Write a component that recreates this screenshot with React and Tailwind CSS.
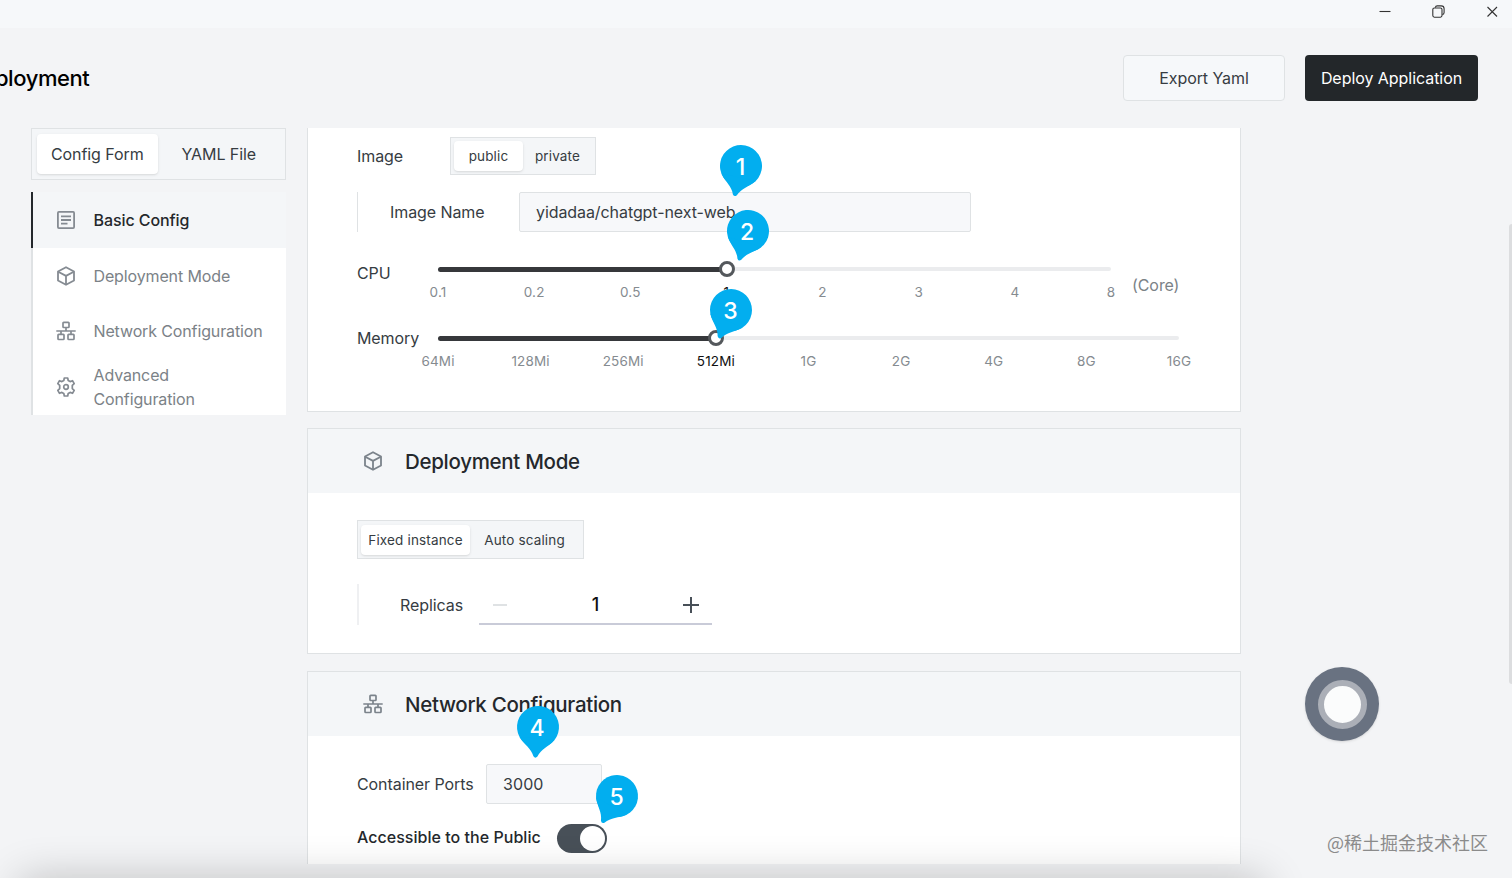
import React, { useState } from "react";

const cpuMarks = ["0.1", "0.2", "0.5", "1", "2", "3", "4", "8"];
const memoryMarks = ["64Mi", "128Mi", "256Mi", "512Mi", "1G", "2G", "4G", "8G", "16G"];

const FormIcon = () => (
  <svg width="20" height="20" viewBox="0 0 20 20" fill="none" stroke="currentColor" strokeWidth="1.8">
    <rect x="1.9" y="1.9" width="16.2" height="16.2" rx="1" />
    <path d="M5 6.3h10M5 10h10M5 13.7h6.5" />
  </svg>
);

const CubeIcon = () => (
  <svg width="20" height="20" viewBox="0 0 20 20" fill="none" stroke="currentColor" strokeWidth="1.8" strokeLinejoin="round">
    <path d="M10 1.2l8 4.3v9L10 18.8l-8-4.3v-9z" />
    <path d="M2.2 5.7L10 9.9l7.8-4.2M10 9.9v8.7" />
  </svg>
);

const NetworkIcon = () => (
  <svg width="20" height="20" viewBox="0 0 20 20" fill="none" stroke="currentColor" strokeWidth="1.7">
    <rect x="7" y="1.3" width="6" height="5.2" rx="0.8" />
    <rect x="2" y="13.3" width="6" height="5.2" rx="0.8" />
    <rect x="12" y="13.3" width="6" height="5.2" rx="0.8" />
    <path d="M0.3 10h19.4M10 6.5V10M5 10v3.3M15 10v3.3" />
  </svg>
);

const GearIcon = () => (
  <svg width="20" height="20" viewBox="0 0 20 20" fill="none" stroke="currentColor" strokeWidth="1.7" strokeLinejoin="round">
    <path d="M8.3 1h3.4l.5 2.5 1.9 1.1 2.4-.9 1.7 3-1.9 1.7v3.2l1.9 1.7-1.7 3-2.4-.9-1.9 1.1-.5 2.5H8.3l-.5-2.5-1.9-1.1-2.4.9-1.7-3 1.9-1.7V8.4L1.8 6.7l1.7-3 2.4.9 1.9-1.1z" />
    <circle cx="10" cy="10" r="2.3" />
  </svg>
);

const navItems = [
  { label: "Basic Config", icon: FormIcon },
  { label: "Deployment Mode", icon: CubeIcon },
  { label: "Network Configuration", icon: NetworkIcon },
  { label: "Advanced Configuration", icon: GearIcon },
];

const WindowControls = () => (
  <div className="flex h-7 items-center justify-end gap-[41px] bg-[#f6f8fa] pr-[13px] pb-[5px] text-[#333]">
    <svg width="13" height="13" viewBox="0 0 13 13" stroke="currentColor" strokeWidth="1.1">
      <path d="M1.5 6.5h11" />
    </svg>
    <svg width="13" height="13" viewBox="0 0 13 13" fill="none" stroke="currentColor" strokeWidth="1.1">
      <rect x="0.8" y="3" width="9.2" height="9.2" rx="1.6" />
      <path d="M3.3 2.6C3.5 1.4 4.3.9 5.3.9h3.9c1.8 0 2.9 1.2 2.9 2.9v3.8c0 1-.5 1.8-1.7 2" />
    </svg>
    <svg width="13" height="13" viewBox="0 0 13 13" stroke="currentColor" strokeWidth="1.1">
      <path d="M1.5 2l9.5 9.5M11 2L1.5 11.5" />
    </svg>
  </div>
);

const Slider = ({ marks, value, className }) => {
  const step = 100 / (marks.length - 1);
  return (
    <div className={className}>
      <div className="relative h-1 rounded-full bg-[#ebecee]">
        <div className="h-[5px] rounded-full bg-[#36383b]" style={{ width: `${step * value}%` }} />
        <div
          className="absolute top-1/2 size-4 -translate-x-1/2 -translate-y-1/2 rounded-full border-3 border-[#54585c] bg-white"
          style={{ left: `calc(${step * value}% + 0.5px)` }}
        />
        {marks.map((mark, i) => (
          <span
            key={mark}
            className={`absolute top-[15px] -translate-x-1/2 text-[13.5px] leading-5 tracking-[0.15px] whitespace-nowrap ${
              i === value ? "text-[#111]" : "text-[#858b90]"
            }`}
            style={{ left: `${step * i}%` }}
          >
            {mark}
          </span>
        ))}
      </div>
    </div>
  );
};

const Marker = ({ number, angle, className }) => (
  <div className={`absolute size-[42px] text-white ${className}`}>
    <svg className="absolute inset-0 overflow-visible" width="42" height="42" viewBox="0 0 42 42" fill="#02aeef">
      <g transform={`rotate(${angle} 21 21)`}>
        <circle cx="21" cy="21" r="21" />
        <path d="M3.5 32.5C9 40 16 42.5 19 50.5Q21 53 23 50.5C26 42.5 33 40 38.5 32.5z" />
      </g>
    </svg>
    <span className="relative flex size-full items-center justify-center pt-0.5 pr-px text-[23px] font-medium">{number}</span>
  </div>
);

const CardHeader = ({ icon: Icon, title }) => (
  <div className="flex h-16 items-center gap-[22px] bg-[#f4f6f8] pl-[55px] text-[#7b838b]">
    <Icon />
    <h2 className="pt-0.5 text-[20.5px] font-medium tracking-[-0.3px] text-[#24282c]">{title}</h2>
  </div>
);

const App = () => {
  const [replicas, setReplicas] = useState(1);
  const [isPublic, setIsPublic] = useState(true);

  return (
    <div className="relative flex h-[878px] w-[1512px] flex-col overflow-hidden bg-[#f3f4f6] font-['Inter',sans-serif] text-[16px] tracking-[-0.08px] text-[#363c42]">
      <WindowControls />

      <header className="flex h-[100px] items-center justify-between pr-[34px]">
        <h1 className="-ml-[33px] text-[22px] font-medium tracking-[-0.43px] text-black">Deployment</h1>
        <div className="flex gap-5">
          <button className="h-[46px] w-[162px] rounded border border-[#dfe2e4] bg-[#f6f8fa]">Export Yaml</button>
          <button className="h-[46px] w-[173px] rounded bg-[#23272a] tracking-[-0.05px] text-white">Deploy Application</button>
        </div>
      </header>

      <div className="flex h-[736px] gap-[21px] overflow-hidden pl-[31px]">
        <aside className="w-[255px] shrink-0">
          <div className="flex h-[52px] items-center border border-[#dfe2e4] bg-[#f4f6f8] p-[5px]">
            <button className="h-10 w-[122px] rounded-sm bg-white shadow-sm">Config Form</button>
            <button className="h-10 w-[124px]">YAML File</button>
          </div>
          <nav className="mt-3">
            {navItems.map(({ label, icon: Icon }, i) => (
              <div
                key={label}
                className={`flex h-[55.7px] items-center gap-[18px] border-l-2 pr-5 pl-[22.5px] leading-6 ${
                  i === 0
                    ? "border-[#24282c] bg-[#f4f6f8] font-medium text-[#24282c]"
                    : "border-[#dfe2e4] bg-white tracking-[-0.13px] text-[#7b8287]"
                }`}
              >
                <span className="shrink-0 text-[#858b92]"><Icon /></span>
                <span>{label}</span>
              </div>
            ))}
          </nav>
        </aside>

        <main className="w-[934px] shrink-0">
          {/* basic config, scrolled under the header */}
          <section className="h-[284px] border border-t-0 border-[#dfe2e4] bg-white pt-[9px] pl-[49px]">
            <div className="flex h-[38px] items-center">
              <span className="w-[93px]">Image</span>
              <div className="flex h-[38px] w-[146px] items-center border border-[#dfe2e4] bg-[#f4f6f8] p-[3px] text-[13.5px] tracking-[0.15px]">
                <button className="h-[30px] w-[69px] rounded-sm bg-white pt-px shadow-sm">public</button>
                <button className="h-[30px] w-[69px] pt-px">private</button>
              </div>
            </div>

            <div className="mt-[17px] flex h-10 items-center border-l border-[#dfe2e4] pl-8">
              <span className="w-[129px]">Image Name</span>
              <div className="flex h-10 w-[452px] items-center rounded-xs border border-[#dfe2e4] bg-[#f7f8fa] pl-4">
                yidadaa/chatgpt-next-web
              </div>
            </div>

            <div className="mt-[29px] flex h-[65px]">
              <span className="w-[81px] leading-6">CPU</span>
              <Slider marks={cpuMarks} value={3} className="w-[673px] pt-[6px]" />
              <span className="pt-3 pl-[21px] leading-6 text-[#7b8287]">(Core)</span>
            </div>
            <div className="flex">
              <span className="w-[81px] leading-6">Memory</span>
              <Slider marks={memoryMarks} value={3} className="w-[741px] pt-[10px]" />
            </div>
          </section>

          <section className="mt-4 h-[226px] border border-[#dfe2e4] bg-white">
            <CardHeader icon={CubeIcon} title="Deployment Mode" />
            <div className="pt-[27px] pl-[49px]">
              <div className="flex h-[39px] w-[227px] items-center border border-[#dfe2e4] bg-[#f4f6f8] p-[3px] text-[13.5px] tracking-[0.15px]">
                <button className="h-[30px] w-[109px] rounded-sm bg-white pt-0.5 shadow-sm">Fixed instance</button>
                <button className="h-[30px] w-[109px] pt-0.5">Auto scaling</button>
              </div>
              <div className="mt-[25px] flex h-[41px] items-center border-l-2 border-[#eff0f2] pl-[41px]">
                <span className="w-[79px]">Replicas</span>
                <div className="flex h-full w-[233px] items-center justify-between border-b-2 border-[#c9cbd8] px-3 pt-0.5">
                  <button disabled={replicas === 1} onClick={() => setReplicas(replicas - 1)} className="text-[#dfe2e4]">
                    <svg width="18" height="18" viewBox="0 0 18 18" stroke="currentColor" strokeWidth="2">
                      <path d="M2 9h14" />
                    </svg>
                  </button>
                  <span className="text-[18px] font-medium text-[#111]">{replicas}</span>
                  <button onClick={() => setReplicas(replicas + 1)} className="text-[#485058]">
                    <svg width="18" height="18" viewBox="0 0 18 18" stroke="currentColor" strokeWidth="2">
                      <path d="M1 9h16M9 1v16" />
                    </svg>
                  </button>
                </div>
              </div>
            </div>
          </section>

          <section className="mt-[17px] h-[226px] border border-[#dfe2e4] bg-white">
            <CardHeader icon={NetworkIcon} title="Network Configuration" />
            <div className="pt-[28px] pl-[49px]">
              <div className="flex h-10 items-center">
                <span className="w-[129px]">Container Ports</span>
                <div className="flex h-10 w-[116px] items-center rounded-xs border border-[#dfe2e4] bg-[#f7f8fa] pl-4 tracking-[0.1px]">3000</div>
              </div>
              <div className="mt-5 flex h-[29px] items-center">
                <span className="w-[200px] pb-[3px] font-medium tracking-[0.03px] text-[#24282c]">Accessible to the Public</span>
                <button
                  onClick={() => setIsPublic(!isPublic)}
                  className={`flex h-[29px] w-[50px] items-center rounded-full p-0.5 ${isPublic ? "justify-end bg-[#485058]" : "bg-[#c9cbd8]"}`}
                >
                  <span className="size-[25px] rounded-full bg-white" />
                </button>
              </div>
            </div>
          </section>
        </main>
      </div>

      {/* numbered steps */}
      <Marker number={1} angle={12} className="top-[145px] left-[720px]" />
      <Marker number={2} angle={17} className="top-[210px] left-[726.5px]" />
      <Marker number={3} angle={23} className="top-[289px] left-[710px]" />
      <Marker number={4} angle={5} className="top-[706px] left-[516.5px]" />
      <Marker number={5} angle={29} className="top-[775px] left-[596px]" />

      {/* floating assist button */}
      <div className="absolute top-[667px] left-[1305px] flex size-[74px] items-center justify-center rounded-full bg-[#697281] shadow-sm">
        <div className="size-[49px] rounded-full border-[6px] border-[#abafb7] bg-[#fbfcfc]" />
      </div>

      <div className="absolute top-[224px] right-0 h-[460px] w-[3px] rounded-l-full bg-[#dcdddf]" />

      <div className="absolute right-[24px] bottom-[24px] font-['Noto_Sans_CJK_SC',sans-serif] text-[18px] leading-6 tracking-normal text-[#8b8b8b]">
        @稀土掘金技术社区
      </div>

      {/* shadow of the dock under the window */}
      <div className="absolute top-[880px] left-[20px] h-10 w-[1244px] shadow-[0_0_44px_rgba(0,0,0,0.24)]" />
    </div>
  );
};

export default App;
